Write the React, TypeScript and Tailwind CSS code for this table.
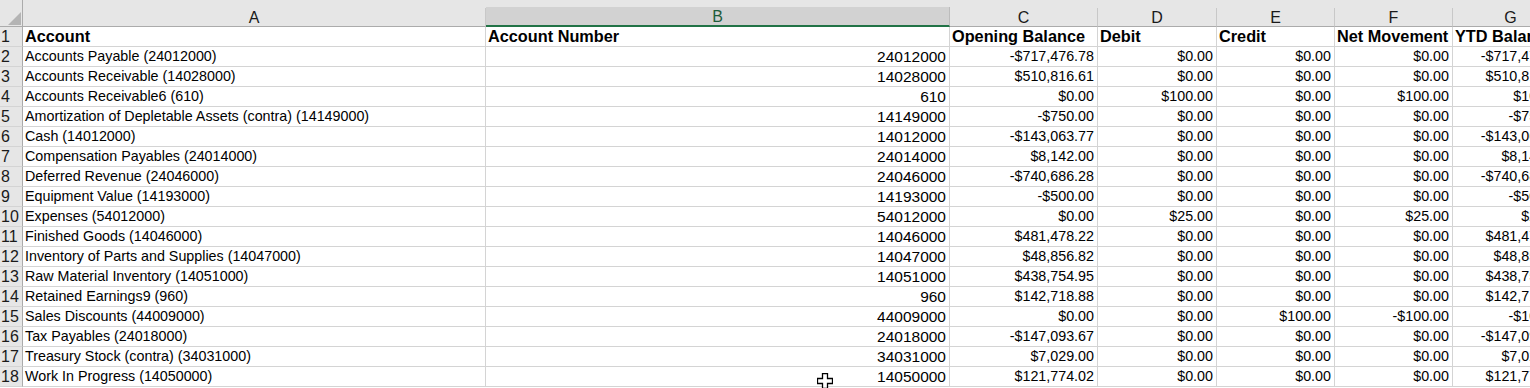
const cols = [
  { key: 'A', w: 'w-[463px]' },
  { key: 'B', w: 'w-[464px]' },
  { key: 'C', w: 'w-[148px]' },
  { key: 'D', w: 'w-[119px]' },
  { key: 'E', w: 'w-[118px]' },
  { key: 'F', w: 'w-[118px]' },
  { key: 'G', w: 'w-[116px]' },
];

const headers = ['Account', 'Account Number', 'Opening Balance', 'Debit', 'Credit', 'Net Movement', 'YTD Balance'];

const rows: string[][] = [
  ['Accounts Payable (24012000)', '24012000', '-$717,476.78', '$0.00', '$0.00', '$0.00', '-$717,476.78'],
  ['Accounts Receivable (14028000)', '14028000', '$510,816.61', '$0.00', '$0.00', '$0.00', '$510,816.61'],
  ['Accounts Receivable6 (610)', '610', '$0.00', '$100.00', '$0.00', '$100.00', '$100.00'],
  ['Amortization of Depletable Assets (contra) (14149000)', '14149000', '-$750.00', '$0.00', '$0.00', '$0.00', '-$750.00'],
  ['Cash (14012000)', '14012000', '-$143,063.77', '$0.00', '$0.00', '$0.00', '-$143,063.77'],
  ['Compensation Payables (24014000)', '24014000', '$8,142.00', '$0.00', '$0.00', '$0.00', '$8,142.00'],
  ['Deferred Revenue (24046000)', '24046000', '-$740,686.28', '$0.00', '$0.00', '$0.00', '-$740,686.28'],
  ['Equipment Value (14193000)', '14193000', '-$500.00', '$0.00', '$0.00', '$0.00', '-$500.00'],
  ['Expenses (54012000)', '54012000', '$0.00', '$25.00', '$0.00', '$25.00', '$25.00'],
  ['Finished Goods (14046000)', '14046000', '$481,478.22', '$0.00', '$0.00', '$0.00', '$481,478.22'],
  ['Inventory of Parts and Supplies (14047000)', '14047000', '$48,856.82', '$0.00', '$0.00', '$0.00', '$48,856.82'],
  ['Raw Material Inventory (14051000)', '14051000', '$438,754.95', '$0.00', '$0.00', '$0.00', '$438,754.95'],
  ['Retained Earnings9 (960)', '960', '$142,718.88', '$0.00', '$0.00', '$0.00', '$142,718.88'],
  ['Sales Discounts (44009000)', '44009000', '$0.00', '$0.00', '$100.00', '-$100.00', '-$100.00'],
  ['Tax Payables (24018000)', '24018000', '-$147,093.67', '$0.00', '$0.00', '$0.00', '-$147,093.67'],
  ['Treasury Stock (contra) (34031000)', '34031000', '$7,029.00', '$0.00', '$0.00', '$0.00', '$7,029.00'],
  ['Work In Progress (14050000)', '14050000', '$121,774.02', '$0.00', '$0.00', '$0.00', '$121,774.02'],
];

function RowHead({ n }: { n: number }) {
  return (
    <div className="w-[23px] shrink-0 h-full bg-[#e6e6e6] border-r border-r-[#ababab] border-b border-b-[#d4d4d4] flex items-center pl-[1px] text-[16px] leading-none text-[#1a1a1a]">
      {n}
    </div>
  );
}

export default function App() {
  return (
    <div className="relative w-[1530px] h-[388px] overflow-hidden bg-white font-['Liberation_Sans',Arial,sans-serif] text-black">
      {/* column letters */}
      <div className="flex h-[27px] bg-[#e6e6e6] w-[1600px]">
        <div className="w-[23px] shrink-0 border-r border-r-[#ababab] border-b border-b-[#ababab] relative">
          <svg className="absolute left-[8px] top-[12px]" width="13" height="13" viewBox="0 0 13 13">
            <polygon points="13,0 13,13 0,13" fill="#b4b4b4" />
          </svg>
        </div>
        {cols.map((c) => (
          <div key={c.key} className={`${c.w} shrink-0 flex flex-col`}>
            <div className="h-[8px]" />
            {c.key === 'B' ? (
              <div className="flex-1 bg-[#d2d2d2] border-r border-r-[#bcbcbc] border-b-2 border-b-[#217346] flex items-center justify-center text-[16px] leading-none text-[#1e5c3a] pt-[2px]">
                B
              </div>
            ) : (
              <div className="flex-1 border-r border-r-[#c8c8c8] border-b border-b-[#ababab] flex items-center justify-center text-[16px] leading-none text-[#1a1a1a] pt-[2px]">
                {c.key}
              </div>
            )}
          </div>
        ))}
      </div>

      {/* header row */}
      <div className="flex h-[20px] w-[1600px]">
        <RowHead n={1} />
        {headers.map((h, i) => (
          <div
            key={h}
            className={`${cols[i].w} shrink-0 h-full border-r border-b border-[#d4d4d4] flex items-center pl-[2px] text-[16.3px] font-bold whitespace-nowrap overflow-hidden`}
          >
            {h}
          </div>
        ))}
      </div>

      {rows.map((r, ri) => (
        <div key={ri} className="flex h-[20px] w-[1600px]">
          <RowHead n={ri + 2} />
          {r.map((v, ci) => (
            <div
              key={ci}
              className={`${cols[ci].w} shrink-0 h-full border-r border-b border-[#d4d4d4] flex items-center pt-[1px] text-[14.3px] whitespace-nowrap overflow-hidden ${
                ci === 0 ? 'pl-[2px]' : 'justify-end pr-[3px]'
              } ${ci === 1 ? 'text-[15.5px]' : ''}`}
            >
              {v}
            </div>
          ))}
        </div>
      ))}

      {/* mouse cursor */}
      <svg className="absolute left-[817px] top-[373px]" width="16" height="16" viewBox="0 0 16 16">
        <path
          d="M5.5 0.5 H10.5 V5.5 H15.5 V10.5 H10.5 V15.5 H5.5 V10.5 H0.5 V5.5 H5.5 Z"
          fill="#fff"
          stroke="#000"
          strokeWidth="1.3"
        />
      </svg>
    </div>
  );
}
